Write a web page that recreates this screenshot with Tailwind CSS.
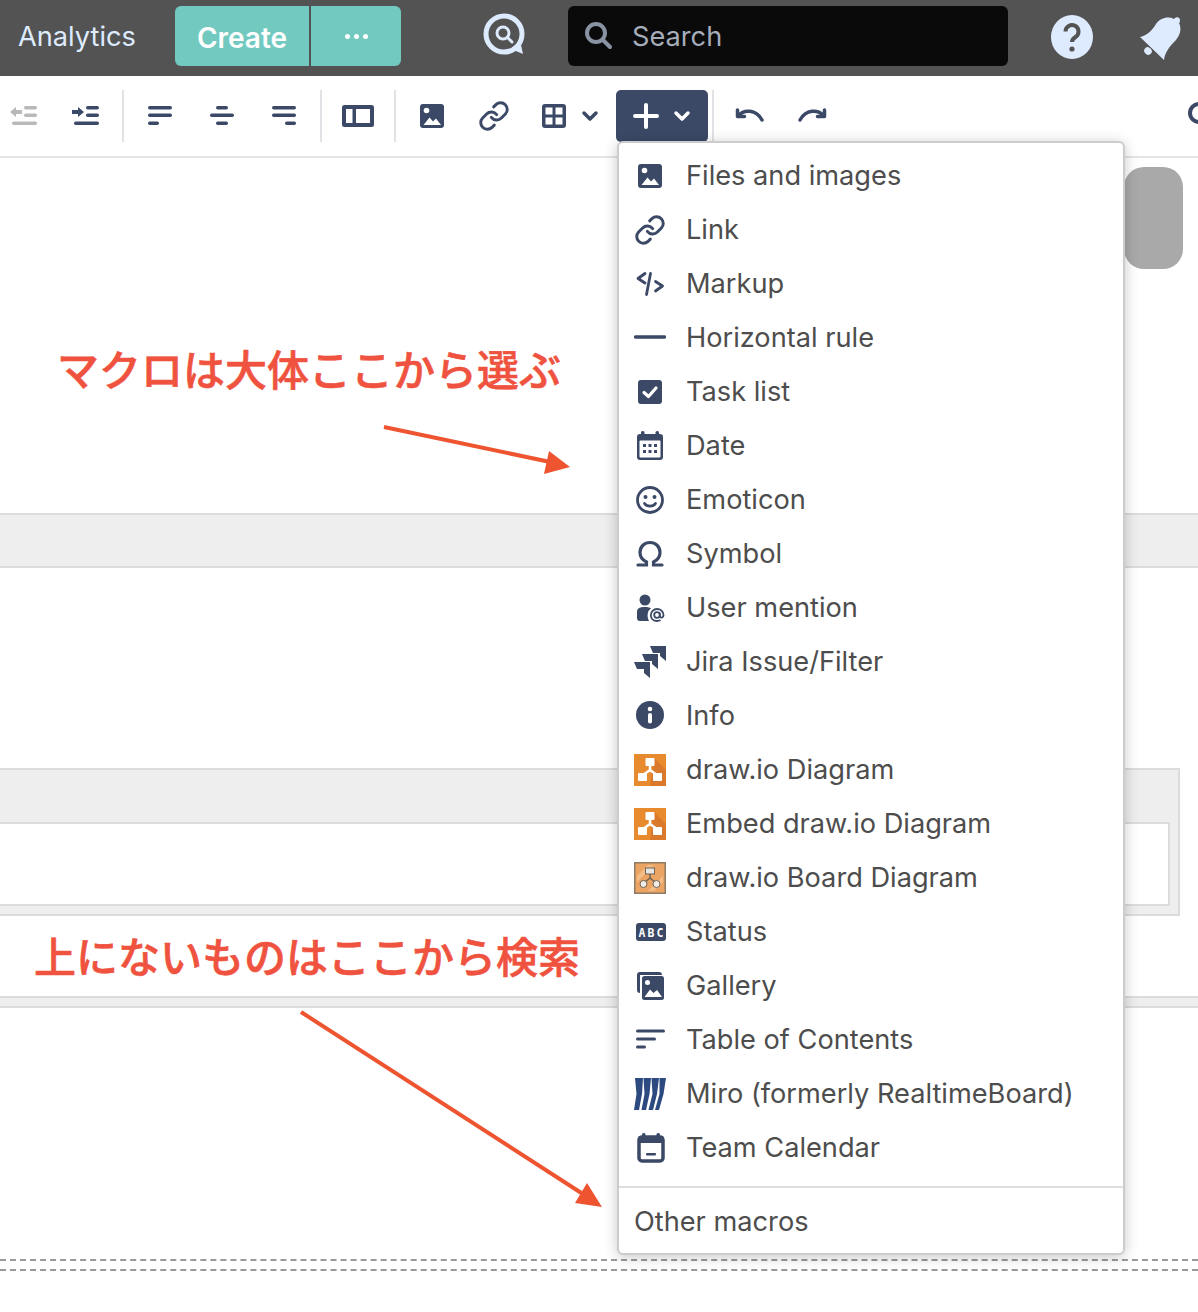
<!DOCTYPE html>
<html>

<head>
    <meta charset="utf-8" />
    <title>Editor macro menu</title>
    <script src="https://cdn.jsdelivr.net/npm/@tailwindcss/browser@4"></script>
</head>

<body class="bg-white font-['Inter','Noto_Sans_CJK_JP',sans-serif]">
    <svg class="hidden">
        <symbol id="image" viewBox="0 0 32 32">
            <rect x="4" y="4" width="24" height="24" rx="3" fill="#3b4966" />
            <circle cx="10.5" cy="10.5" r="2.8" fill="#fff" />
            <path d="M7.500 25 L13.500 17.500 L17 21.500 L20 18.500 L25 25 Z" fill="#fff" />
        </symbol>
        <symbol id="link" viewBox="0 0 24 24">
            <g fill="none" stroke="#3b4966" stroke-width="2.200" stroke-linecap="round" stroke-linejoin="round">
                <path d="M10 13a5 5 0 0 0 7.540.540l3-3a5 5 0 0 0-7.070-7.070l-1.720 1.710" />
                <path d="M14 11a5 5 0 0 0-7.540-.540l-3 3a5 5 0 0 0 7.070 7.070l1.710-1.710" />
            </g>
        </symbol>
        <symbol id="drawio" viewBox="0 0 32 32">
            <rect width="32" height="32" fill="#e88b2e" />
            <path d="M20 4 L32 16 V32 H16 Z" fill="#da792c" />
            <path d="M16 12 V18 M9 21 L16 16 L23 21" fill="none" stroke="#fff" stroke-width="2.500" />
            <rect x="11.500" y="4" width="9" height="8" rx="1" fill="#fff" />
            <rect x="4" y="19" width="9" height="8" rx="1" fill="#fff" />
            <rect x="19" y="19" width="9" height="8" rx="1" fill="#fff" />
        </symbol>
    </svg>

    <div class="relative w-[1198px] h-[1312px] overflow-hidden">
        <!-- top nav -->
        <header class="h-[76px] bg-[#535353] flex items-center pb-[4px]">
            <span class="ml-[18px] mt-[3px] w-[157px] text-[27.2px] text-[#deebff]">Analytics</span>
            <div class="w-[226px] h-[60px] rounded-md bg-[#72c9c0] flex text-white">
                <div class="w-[136px] pt-[3px] border-r-2 border-[#535353] flex items-center justify-center text-[28px] font-semibold">Create</div>
                <div class="flex-1 flex items-center justify-center gap-[4px]">
                    <span class="size-[5px] rounded-full bg-white"></span>
                    <span class="size-[5px] rounded-full bg-white"></span>
                    <span class="size-[5px] rounded-full bg-white"></span>
                </div>
            </div>
            <svg class="ml-[80px] w-[46px] h-[46px]" viewBox="0 0 46 46" fill="none">
                <circle cx="23" cy="21" r="18" stroke="#deebff" stroke-width="5" />
                <circle cx="22" cy="20" r="6" stroke="#deebff" stroke-width="3" />
                <path d="M26.500 24.500 L31 29" stroke="#deebff" stroke-width="3" stroke-linecap="round" />
                <path d="M30 36 L40 32 L42 41 Z" fill="#deebff" />
            </svg>
            <div class="ml-[41px] w-[440px] h-[60px] rounded-md bg-[#0a0a0a] flex items-center">
                <svg class="ml-[14px] w-[32px] h-[32px]" viewBox="0 0 32 32" fill="none" stroke="#8993a4" stroke-width="4">
                    <circle cx="14" cy="13" r="9" />
                    <path d="M21 20 L28 27" stroke-linecap="round" />
                </svg>
                <span class="ml-[18px] mt-[3px] text-[27.2px] text-[#a5adba]">Search</span>
            </div>
            <svg class="ml-[42px] mt-[2px] w-[44px] h-[48px]" viewBox="0 0 44 48">
                <ellipse cx="22" cy="24" rx="21" ry="22" fill="#deebff" />
                <path d="M15.500 18.500 a6.500 6.500 0 1 1 10 5.500 c-2.500 1.600 -3.500 2.500 -3.500 5" fill="none" stroke="#535353" stroke-width="4" />
                <circle cx="22" cy="36" r="2.600" fill="#535353" />
            </svg>
            <svg class="ml-[42px] mt-[2px] w-[48px] h-[48px]" viewBox="0 0 48 48" fill="#deebff">
                <path d="M4 24 C10 23 16 18 20 11 C24 5 32 3 38 6 C40 3 44 4 44 7 C44 9 43.500 10 43 10 C46 16 44 22 40 27 C34 33 29 39 28 47 Z" />
                <ellipse cx="12" cy="38" rx="3.500" ry="4" transform="rotate(-45 12 38)" />
            </svg>
        </header>

        <!-- editor toolbar -->
        <div class="h-[82px] border-b-2 border-[#e4e4e8] flex items-center pl-[8px] [&>*]:shrink-0">
            <svg class="w-[32px] h-[32px]" viewBox="0 0 32 32" fill="#b9b9b9">
                <path d="M2 12 L8 7 V10 H14 V14 H8 V17 Z" />
                <rect x="16" y="6" width="13" height="3.500" rx="1.700" />
                <rect x="16" y="13.500" width="13" height="3.500" rx="1.700" />
                <rect x="4" y="21.500" width="25" height="3.500" rx="1.700" />
            </svg>
            <svg class="ml-[30px] w-[32px] h-[32px]" viewBox="0 0 32 32" fill="#3b4966">
                <path d="M14 12 L8 7 V10 H2 V14 H8 V17 Z" />
                <rect x="16" y="6" width="13" height="3.500" rx="1.700" />
                <rect x="16" y="13.500" width="13" height="3.500" rx="1.700" />
                <rect x="4" y="21.500" width="25" height="3.500" rx="1.700" />
            </svg>
            <span class="ml-[20px] w-[2px] h-[52px] bg-[#e1e1e6]"></span>
            <svg class="ml-[20px] w-[32px] h-[32px]" viewBox="0 0 32 32" fill="#3b4966">
                <rect x="4" y="6" width="24" height="3.500" rx="1.700" />
                <rect x="4" y="13.500" width="24" height="3.500" rx="1.700" />
                <rect x="4" y="21.500" width="11" height="3.500" rx="1.700" />
            </svg>
            <svg class="ml-[30px] w-[32px] h-[32px]" viewBox="0 0 32 32" fill="#3b4966">
                <rect x="10" y="6" width="12" height="3.500" rx="1.700" />
                <rect x="4" y="13.500" width="24" height="3.500" rx="1.700" />
                <rect x="10" y="21.500" width="12" height="3.500" rx="1.700" />
            </svg>
            <svg class="ml-[30px] w-[32px] h-[32px]" viewBox="0 0 32 32" fill="#3b4966">
                <rect x="4" y="6" width="24" height="3.500" rx="1.700" />
                <rect x="4" y="13.500" width="24" height="3.500" rx="1.700" />
                <rect x="17" y="21.500" width="11" height="3.500" rx="1.700" />
            </svg>
            <span class="ml-[20px] w-[2px] h-[52px] bg-[#e1e1e6]"></span>
            <svg class="ml-[18px] w-[36px] h-[32px]" viewBox="0 0 36 32" fill="#3b4966">
                <rect x="2" y="5" width="32" height="22" rx="2.500" />
                <rect x="6" y="9" width="6.500" height="14" fill="#fff" />
                <rect x="16" y="9" width="14" height="14" fill="#fff" />
            </svg>
            <span class="ml-[18px] w-[2px] h-[52px] bg-[#e1e1e6]"></span>
            <svg class="ml-[20px] w-[32px] h-[32px]"><use href="#image" /></svg>
            <svg class="ml-[30px] w-[32px] h-[32px]"><use href="#link" /></svg>
            <svg class="ml-[28px] w-[32px] h-[32px]" viewBox="0 0 32 32">
                <rect x="4" y="4" width="24" height="24" rx="3" fill="#3b4966" />
                <rect x="7.500" y="7.500" width="7" height="7" fill="#fff" />
                <rect x="17.500" y="7.500" width="7" height="7" fill="#fff" />
                <rect x="7.500" y="17.500" width="7" height="7" fill="#fff" />
                <rect x="17.500" y="17.500" width="7" height="7" fill="#fff" />
            </svg>
            <svg class="ml-[10px] w-[20px] h-[32px]" viewBox="0 0 20 32" fill="none" stroke="#3b4966" stroke-width="3.500" stroke-linecap="round" stroke-linejoin="round">
                <path d="M4 13 L10 19 L16 13" />
            </svg>
            <div class="ml-[16px] w-[92px] h-[52px] rounded-[5px] bg-[#3b4966] flex items-center">
                <svg class="ml-[14px] w-[32px] h-[32px]" viewBox="0 0 32 32" stroke="#fff" stroke-width="4" stroke-linecap="round">
                    <path d="M16 5 V27 M5 16 H27" />
                </svg>
                <svg class="ml-[10px] w-[20px] h-[32px]" viewBox="0 0 20 32" fill="none" stroke="#fff" stroke-width="3.500" stroke-linecap="round" stroke-linejoin="round">
                    <path d="M4 13 L10 19 L16 13" />
                </svg>
            </div>
            <span class="ml-[4px] w-[2px] h-[52px] bg-[#e1e1e6]"></span>
            <svg class="ml-[20px] w-[32px] h-[32px]" viewBox="0 0 32 32" fill="none" stroke="#3b4966" stroke-width="3.500" stroke-linecap="round" stroke-linejoin="round">
                <path d="M4 16 C10 9 22 9 28 20" />
                <path d="M3.500 10 V16.500 H10.500" />
            </svg>
            <svg class="ml-[30px] w-[32px] h-[32px]" viewBox="0 0 32 32" fill="none" stroke="#3b4966" stroke-width="3.500" stroke-linecap="round" stroke-linejoin="round">
                <path d="M28 16 C22 9 10 9 4 20" />
                <path d="M28.500 10 V16.500 H21.500" />
            </svg>
            <svg class="ml-[357px] w-[32px] h-[32px]" viewBox="0 0 32 32" fill="none" stroke="#3b4966" stroke-width="4">
                <circle cx="14" cy="13" r="9" />
            </svg>
        </div>

        <!-- page content behind the menu -->
        <main>
            <div class="h-[355px]"></div>
            <div class="h-[55px] bg-[#eeeeee] border-y-2 border-[#dcdcdc]"></div>
            <div class="h-[200px]"></div>
            <div class="w-[1180px] h-[148px] bg-[#eeeeee] border-y-2 border-r-2 border-[#dcdcdc] pt-[52px] pr-[8px]">
                <div class="h-[84px] bg-white border-y-2 border-r-2 border-[#dcdcdc]"></div>
            </div>
            <div class="h-[80px]"></div>
            <div class="h-[12px] bg-[#eeeeee] border-y-2 border-[#dcdcdc]"></div>
            <div class="h-[250px]"></div>
            <div class="mt-[1px] h-[12px] border-y-2 border-dashed border-[#999999]"></div>
        </main>

        <!-- scrollbar thumb -->
        <div class="absolute left-[1124px] top-[167px] w-[59px] h-[102px] rounded-[20px] bg-[#a9a9a9]"></div>

        <!-- annotations -->
        <p class="absolute left-[57px] top-[341px] text-[42px] leading-[60px] font-medium [-webkit-text-stroke:0.6px_#ef5340] text-[#ef5340] whitespace-nowrap">マクロは大体ここから選ぶ</p>
        <p class="absolute left-[34px] top-[928px] text-[42px] leading-[60px] font-medium [-webkit-text-stroke:0.6px_#ef5340] text-[#ef5340] whitespace-nowrap">上にないものはここから検索</p>
        <svg class="absolute left-0 top-0 w-[620px] h-[1312px]" viewBox="0 0 620 1312">
            <path d="M384 427 L555 463" stroke="#ee5430" stroke-width="4" />
            <path d="M570 467 L549 451 L544 474 Z" fill="#ee5430" />
            <path d="M301 1012 L586 1196" stroke="#ee5430" stroke-width="4" />
            <path d="M602 1207 L587 1183 L575 1203 Z" fill="#ee5430" />
        </svg>

        <!-- insert menu -->
        <div class="absolute left-[617px] top-[141px] w-[508px] h-[1114px] bg-white border-2 border-[#cccccc] rounded-md shadow-[0_2px_14px_rgba(0,0,0,0.22)] pt-[6px] text-[27.2px] text-[#4d4d4d]">
            <div class="h-[54px] flex items-center pl-[15px] gap-[20px]">
                <svg class="w-[32px] h-[32px]"><use href="#image" /></svg>
                <span>Files and images</span>
            </div>
            <div class="h-[54px] flex items-center pl-[15px] gap-[20px]">
                <svg class="w-[32px] h-[32px]"><use href="#link" /></svg>
                <span>Link</span>
            </div>
            <div class="h-[54px] flex items-center pl-[15px] gap-[20px]">
                <svg class="w-[32px] h-[32px]" viewBox="0 0 32 32" fill="none" stroke="#3b4966" stroke-width="2.800" stroke-linecap="round" stroke-linejoin="round">
                    <path d="M11 5.500 L4 10.500 L11 15 M21.500 13.500 L28.500 18 L21.500 23 M16.500 5.500 L12.500 26.500" />
                </svg>
                <span>Markup</span>
            </div>
            <div class="h-[54px] flex items-center pl-[15px] gap-[20px]">
                <svg class="w-[32px] h-[32px]" viewBox="0 0 32 32" stroke="#3b4966" stroke-width="3.500" stroke-linecap="round">
                    <path d="M1.500 15 H30.500" />
                </svg>
                <span>Horizontal rule</span>
            </div>
            <div class="h-[54px] flex items-center pl-[15px] gap-[20px]">
                <svg class="w-[32px] h-[32px]" viewBox="0 0 32 32">
                    <rect x="4" y="4" width="24" height="24" rx="3" fill="#3b4966" />
                    <path d="M10 16.500 L14.500 20.500 L22 12" fill="none" stroke="#fff" stroke-width="3.200" stroke-linecap="round" stroke-linejoin="round" />
                </svg>
                <span>Task list</span>
            </div>
            <div class="h-[54px] flex items-center pl-[15px] gap-[20px]">
                <svg class="w-[32px] h-[32px]" viewBox="0 0 32 32" fill="#3b4966">
                    <rect x="3" y="4" width="26" height="26" rx="3" />
                    <rect x="7" y="1" width="3.500" height="6" rx="1.500" />
                    <rect x="21.500" y="1" width="3.500" height="6" rx="1.500" />
                    <rect x="5.500" y="10.500" width="21" height="17" rx="1" fill="#fff" />
                    <rect x="9" y="14" width="3" height="3" />
                    <rect x="14.500" y="14" width="3" height="3" />
                    <rect x="20" y="14" width="3" height="3" />
                    <rect x="9" y="20" width="3" height="3" />
                    <rect x="14.500" y="20" width="3" height="3" />
                    <rect x="20" y="20" width="3" height="3" />
                </svg>
                <span>Date</span>
            </div>
            <div class="h-[54px] flex items-center pl-[15px] gap-[20px]">
                <svg class="w-[32px] h-[32px]" viewBox="0 0 32 32" fill="none" stroke="#3b4966" stroke-width="2.800">
                    <circle cx="16" cy="16" r="12.500" />
                    <circle cx="11.500" cy="13" r="2" fill="#3b4966" stroke="none" />
                    <circle cx="20.500" cy="13" r="2" fill="#3b4966" stroke="none" />
                    <path d="M10.500 19.500 C13 23 19 23 21.500 19.500" stroke-linecap="round" />
                </svg>
                <span>Emoticon</span>
            </div>
            <div class="h-[54px] flex items-center pl-[15px] gap-[20px]">
                <svg class="w-[32px] h-[32px]" viewBox="0 0 32 32" fill="none" stroke="#3b4966" stroke-width="3.200" stroke-linecap="round">
                    <path d="M4 27 H12.500 V24 C8.500 22 6 19 6 14.500 C6 8.500 10.500 4.500 16 4.500 S26 8.500 26 14.500 C26 19 23.500 22 19.500 24 V27 H28" />
                </svg>
                <span>Symbol</span>
            </div>
            <div class="h-[54px] flex items-center pl-[15px] gap-[20px]">
                <svg class="w-[32px] h-[32px]" viewBox="0 0 32 32" fill="#3b4966">
                    <circle cx="11" cy="8" r="5.500" />
                    <path d="M3 20 C3 16 6 15 11 15 C14 15 16 15.500 17 16.500 C13.500 18.500 12.500 24 15 29 H6 C4 29 3 28 3 26 Z" />
                    <g fill="none" stroke="#3b4966" stroke-width="1.800">
                        <circle cx="23" cy="23" r="2.800" />
                        <path d="M25.800 20.500 V24 C25.800 26.500 29.500 26 29.500 23 C29.500 19.500 26.500 17 23 17 C19.500 17 16.800 19.800 16.800 23 C16.800 26.500 19.500 29 23 29 C24.500 29 25.500 28.700 26.500 28" />
                    </g>
                </svg>
                <span>User mention</span>
            </div>
            <div class="h-[54px] flex items-center pl-[15px] gap-[20px]">
                <svg class="w-[32px] h-[32px]" viewBox="0 0 32 32" fill="#3b4966">
                    <path d="M16 0 H32 V15 L26 10 V7 H19 Z" />
                    <path d="M8 8 H24 V23 L18 18 V15 H11 Z" />
                    <path d="M0 16 H16 V32 L10 27 V23 H3 Z" />
                </svg>
                <span>Jira Issue/Filter</span>
            </div>
            <div class="h-[54px] flex items-center pl-[15px] gap-[20px]">
                <svg class="w-[32px] h-[32px]" viewBox="0 0 32 32">
                    <circle cx="16" cy="15" r="14" fill="#3b4966" />
                    <circle cx="16" cy="9" r="2.300" fill="#fff" />
                    <rect x="14" y="13" width="4" height="10.500" rx="2" fill="#fff" />
                </svg>
                <span>Info</span>
            </div>
            <div class="h-[54px] flex items-center pl-[15px] gap-[20px]">
                <svg class="w-[32px] h-[32px] blur-[0.4px]"><use href="#drawio" /></svg>
                <span>draw.io Diagram</span>
            </div>
            <div class="h-[54px] flex items-center pl-[15px] gap-[20px]">
                <svg class="w-[32px] h-[32px] blur-[0.4px]"><use href="#drawio" /></svg>
                <span>Embed draw.io Diagram</span>
            </div>
            <div class="h-[54px] flex items-center pl-[15px] gap-[20px]">
                <svg class="w-[32px] h-[32px] blur-[0.4px]" viewBox="0 0 32 32">
                    <rect x="0.750" y="0.750" width="30.500" height="30.500" fill="#eca464" stroke="#8d7b66" stroke-width="1.500" />
                    <path d="M3 14 L14 3 H20 L3 20 Z M14 29 L29 14 V20 L20 29 Z" fill="#f3bd88" />
                    <path d="M16 12 V17 M10 21 L16 16 L22 21" fill="none" stroke="#6f6458" stroke-width="1.500" />
                    <rect x="11.500" y="6" width="9" height="6" fill="#e8e4de" stroke="#6f6458" />
                    <circle cx="9.500" cy="22" r="3.500" fill="#f0ebe4" stroke="#6f6458" />
                    <circle cx="22.500" cy="22" r="3.500" fill="#f0ebe4" stroke="#6f6458" />
                </svg>
                <span>draw.io Board Diagram</span>
            </div>
            <div class="h-[54px] flex items-center pl-[15px] gap-[20px]">
                <svg class="w-[32px] h-[32px]" viewBox="0 0 32 32">
                    <rect x="2" y="7" width="30" height="18" rx="3" fill="#3b4966" />
                    <text x="4.500" y="20.500" textLength="25" lengthAdjust="spacing" font-family="DejaVu Sans Mono" font-weight="700" font-size="11.500" fill="#fff">ABC</text>
                </svg>
                <span>Status</span>
            </div>
            <div class="h-[54px] flex items-center pl-[15px] gap-[20px]">
                <svg class="w-[32px] h-[32px]" viewBox="0 0 32 32" fill="#3b4966">
                    <path d="M3 5 a3 3 0 0 1 3 -3 H25 a3 3 0 0 1 3 3 H6 V23 a3 3 0 0 1 -3 -3 Z" />
                    <rect x="8" y="6" width="22" height="24" rx="2.500" />
                    <circle cx="13.500" cy="12.500" r="2.500" fill="#fff" />
                    <path d="M10.500 27 L16 19.500 L19.500 23 L23 20 L28 27 Z" fill="#fff" />
                </svg>
                <span>Gallery</span>
            </div>
            <div class="h-[54px] flex items-center pl-[15px] gap-[20px]">
                <svg class="w-[32px] h-[32px]" viewBox="0 0 32 32" stroke="#3b4966" stroke-width="3" stroke-linecap="round">
                    <path d="M3.500 7 H29.500 M3.500 15 H20.500 M3.500 23 H10.500" />
                </svg>
                <span>Table of Contents</span>
            </div>
            <div class="h-[54px] flex items-center pl-[15px] gap-[20px]">
                <svg class="w-[32px] h-[32px] blur-[0.6px]" viewBox="0 0 32 32" fill="#2c4a80">
                    <path d="M1 0 H9 L8 16 L5 32 H0 L2.500 16 Z" />
                    <path d="M9.500 0 H17 L15.500 16 L12 32 H7.500 L10.500 16 Z" />
                    <path d="M17.500 0 H25 L23 16 L19 32 H14.500 L18.500 16 Z" />
                    <path d="M25.500 0 H32 L29.500 16 L25 32 H21 L25.500 16 Z" />
                </svg>
                <span>Miro (formerly RealtimeBoard)</span>
            </div>
            <div class="h-[54px] flex items-center pl-[15px] gap-[20px]">
                <svg class="w-[32px] h-[32px]" viewBox="0 0 32 32" fill="#3b4966">
                    <rect x="5" y="5" width="24" height="24" rx="3" fill="none" stroke="#3b4966" stroke-width="3.500" />
                    <rect x="4" y="4" width="26" height="7" rx="2" />
                    <rect x="8" y="1" width="3.500" height="5" rx="1.500" />
                    <rect x="22.500" y="1" width="3.500" height="5" rx="1.500" />
                    <rect x="12" y="21" width="10" height="2.500" rx="1" />
                </svg>
                <span>Team Calendar</span>
            </div>
            <div class="mt-[11px] pt-[8px] border-t-2 border-[#dedede] pl-[15px] h-[62px] flex items-center">Other macros</div>
        </div>
    </div>
</body>

</html>
